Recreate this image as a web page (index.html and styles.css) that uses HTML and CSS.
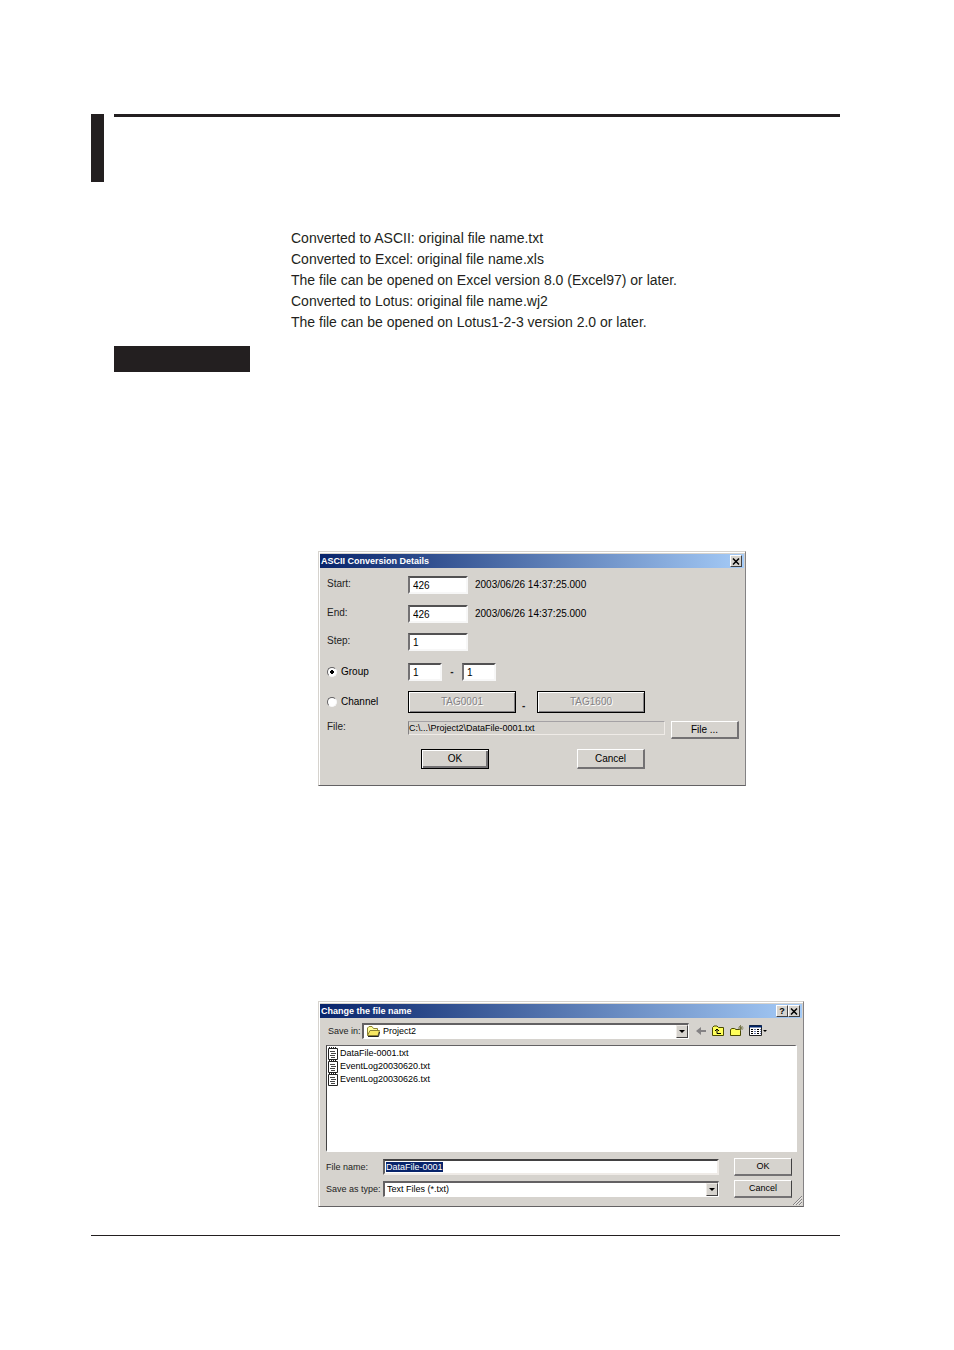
FILE: index.html
```
<!DOCTYPE html>
<html lang="en">
<head>
    <title>ASCII Conversion</title>
    <meta charset="UTF-8">
    <link rel="stylesheet" href="styles.css">
</head>
<body>
    <div class="page">
        <div class="header">
            <div class="header-bar"></div>
            <div class="header-rule"></div>
        </div>
        <div class="notes">
            Converted to ASCII: original file name.txt<br>
            Converted to Excel: original file name.xls<br>
            The file can be opened on Excel version 8.0 (Excel97) or later.<br>
            Converted to Lotus: original file name.wj2<br>
            The file can be opened on Lotus1-2-3 version 2.0 or later.
        </div>
        <div class="section-tag"></div>

        <!-- conversion details -->
        <form class="dialog details">
            <div class="title">
                <span class="title-text">ASCII Conversion Details</span>
                <button type="button" class="title-button" aria-label="Close">
                    <svg width="8" height="7" viewBox="0 0 8 7"><path d="M1 0.5L7 6.5M7 0.5L1 6.5" stroke="#000" stroke-width="1.5"/></svg>
                </button>
            </div>
            <div class="details-body">
                <div class="row start-row">
                    <label class="label" for="start">Start:</label>
                    <input class="box" id="start" value="426">
                    <span class="date">2003/06/26 14:37:25.000</span>
                </div>
                <div class="row">
                    <label class="label" for="end">End:</label>
                    <input class="box" id="end" value="426">
                    <span class="date">2003/06/26 14:37:25.000</span>
                </div>
                <div class="row step-row">
                    <label class="label" for="step">Step:</label>
                    <input class="box" id="step" value="1">
                </div>
                <div class="row">
                    <label class="label radio-label"><input type="radio" name="range" checked>Group</label>
                    <input class="box small" aria-label="First group" value="1">
                    <span class="dash">-</span>
                    <input class="box small" aria-label="Last group" value="1">
                </div>
                <div class="row channel-row">
                    <label class="label radio-label"><input type="radio" name="range">Channel</label>
                    <button type="button" class="tag" disabled>TAG0001</button>
                    <span class="dash low">-</span>
                    <button type="button" class="tag" disabled>TAG1600</button>
                </div>
                <div class="row file-row">
                    <span class="label">File:</span>
                    <span class="path">C:\...\Project2\DataFile-0001.txt</span>
                    <button type="button" class="button">File ...</button>
                </div>
                <div class="row actions">
                    <button type="button" class="button default">OK</button>
                    <button type="button" class="button">Cancel</button>
                </div>
            </div>
        </form>

        <!-- save as -->
        <form class="dialog save">
            <div class="title">
                <span class="title-text">Change the file name</span>
                <button type="button" class="title-button" aria-label="Help">?</button>
                <button type="button" class="title-button" aria-label="Close">
                    <svg width="8" height="7" viewBox="0 0 8 7"><path d="M1 0.5L7 6.5M7 0.5L1 6.5" stroke="#000" stroke-width="1.5"/></svg>
                </button>
            </div>
            <div class="save-body">
                <div class="lookin">
                    <label for="folder">Save in:</label>
                    <div class="combo">
                        <svg class="folder" width="13" height="11" viewBox="0 0 13 11">
                            <path d="M0.5 9.5V2L2 0.5H5L6.5 2.5H10.5V4" fill="#ffff9c" stroke="#8c8232"/>
                            <path d="M0.5 9.5L3 4.5H12.5L11 9.5Z" fill="#f7e763" stroke="#8c8232"/>
                            <path d="M1 10.5H11.5L12.5 6" fill="none" stroke="#222"/>
                        </svg>
                        <select id="folder"><option>Project2</option></select>
                        <span class="arrow"></span>
                    </div>
                    <div class="tools">
                        <button type="button" class="tool" aria-label="Back">
                            <svg width="11" height="12" viewBox="0 0 11 12"><path d="M0 6L5 2V5H10V7H5V10Z" fill="#848284"/></svg>
                        </button>
                        <button type="button" class="tool" aria-label="Up one level">
                            <svg width="13" height="12" viewBox="0 0 13 12">
                                <path d="M0.5 10.5V2.5L2 1H5L6.5 2.5H11.5V10.5Z" fill="#ffff5a" stroke="#4a4a00"/>
                                <path d="M5 4V8.5H9M3 6L5 4L7 6" fill="none" stroke="#000"/>
                            </svg>
                        </button>
                        <button type="button" class="tool" aria-label="New folder">
                            <svg width="14" height="12" viewBox="0 0 14 12">
                                <path d="M0.5 10.5V4.5L2 3.5H4.5L6 4.5H10.5V10.5Z" fill="#ffff5a" stroke="#4a4a00"/>
                                <path d="M10.5 0V6M8 3H13.5M9 1L12.5 5M12.5 1L9 5" stroke="#6b6b3a" stroke-width="0.8"/>
                            </svg>
                        </button>
                        <button type="button" class="tool" aria-label="View">
                            <svg width="19" height="12" viewBox="0 0 19 12">
                                <path d="M0.5 0.5H12.5V10.5H0.5Z" fill="#fff" stroke="#222"/>
                                <path d="M0 1.5H13" stroke="#00246b" stroke-width="2"/>
                                <path d="M2 4.5H4M2 6.5H4M2 8.5H4M8 4.5H10M8 6.5H10M8 8.5H10" stroke="#000"/>
                                <path d="M5 4.5H7M5 6.5H7M5 8.5H7M11 4.5H12M11 6.5H12M11 8.5H12" stroke="#6b79a5"/>
                                <path d="M14 5H18L16 7Z" fill="#000"/>
                            </svg>
                        </button>
                    </div>
                </div>
                <ul class="files">
                    <li><svg class="doc" width="10" height="13" viewBox="0 0 10 13"><path d="M0.5 1.5H9.5V12.5H0.5Z" fill="#fff" stroke="#222"/><path d="M1 0.5H9" stroke="#222" stroke-dasharray="1 1"/><path d="M2 4.5H7M3 6.5H8M2 8.5H7M3 10.5H7" stroke="#444"/></svg>DataFile-0001.txt</li>
                    <li><svg class="doc" width="10" height="13" viewBox="0 0 10 13"><path d="M0.5 1.5H9.5V12.5H0.5Z" fill="#fff" stroke="#222"/><path d="M1 0.5H9" stroke="#222" stroke-dasharray="1 1"/><path d="M2 4.5H7M3 6.5H8M2 8.5H7M3 10.5H7" stroke="#444"/></svg>EventLog20030620.txt</li>
                    <li><svg class="doc" width="10" height="13" viewBox="0 0 10 13"><path d="M0.5 1.5H9.5V12.5H0.5Z" fill="#fff" stroke="#222"/><path d="M1 0.5H9" stroke="#222" stroke-dasharray="1 1"/><path d="M2 4.5H7M3 6.5H8M2 8.5H7M3 10.5H7" stroke="#444"/></svg>EventLog20030626.txt</li>
                </ul>
                <div class="save-row">
                    <label for="filename">File name:</label>
                    <input id="filename" class="filename" value="DataFile-0001">
                    <button type="button" class="button">OK</button>
                </div>
                <div class="save-row">
                    <label for="filetype">Save as type:</label>
                    <div class="combo">
                        <select id="filetype"><option>Text Files (*.txt)</option></select>
                        <span class="arrow"></span>
                    </div>
                    <button type="button" class="button">Cancel</button>
                </div>
            </div>
            <svg class="grip" width="9" height="9" viewBox="0 0 9 9"><path d="M0 9L9 0M3 9L9 3M6 9L9 6" stroke="#848284"/><path d="M1 9L9 1M4 9L9 4M7 9L9 7" stroke="#fff" stroke-width="0.5"/></svg>
        </form>
        <div class="footer-rule"></div>
    </div>
    <script type="text/javascript">
        var filename = document.getElementById("filename");
        filename.focus();
        filename.select();
    </script>
</body>
</html>
```
FILE: styles.css
```
* {
    box-sizing: border-box;
}
body {
    margin: 0;
    background-color: #fff;
    color: #231f20;
    font-family: "Liberation Sans", Arial, sans-serif;
}
svg {
    display: block;
    flex: none;
}
input, select, button {
    margin: 0;
    padding: 0;
    border: 0;
    border-radius: 0;
    outline: 0;
    appearance: none;
    color: #000;
    font: inherit;
}
.page {
    padding: 114px 114px 114px 91px;
}
.header {
    display: flex;
    gap: 10px;
}
.header-bar {
    width: 13px;
    height: 68px;
    background-color: #231f20;
}
.header-rule {
    flex: 1;
    height: 3px;
    background-color: #231f20;
}
.notes {
    margin: 46px 0 13px 200px;
    font-size: 14px;
    line-height: 21px;
}
.section-tag {
    width: 136px;
    height: 26px;
    margin-left: 23px;
    background-color: #231f20;
}
.footer-rule {
    height: 1px;
    margin-top: 28px;
    background-color: #231f20;
}

/* windows */
.dialog {
    max-width: 100%;
    margin-left: 227px;
    padding: 2px 1px 0;
    border: 1px solid #d6d3ce;
    border-right-color: #848284;
    border-bottom-color: #636163;
    box-shadow: inset 1px 1px #fff;
    background-color: #d6d3ce;
    color: #222;
}
.title {
    display: flex;
    align-items: center;
    height: 14px;
    padding: 0 2px 0 1px;
    background: linear-gradient(to right, #08246b, #a5cbf7);
    color: #fff;
    font-size: 9px;
    font-weight: bold;
}
.title-text {
    flex: 1;
}
.title-button {
    display: flex;
    align-items: center;
    justify-content: center;
    width: 12px;
    height: 12px;
    border: 1px solid #fff;
    border-right-color: #424142;
    border-bottom-color: #424142;
    background-color: #d6d3ce;
    line-height: 9px;
}
.button {
    border: 1px solid #fff;
    border-right: 2px solid #737173;
    border-bottom: 2px solid #737173;
    background-color: #d6d3ce;
    text-align: center;
}

/* conversion details */
.details {
    width: 428px;
    margin-top: 179px;
    font-size: 10px;
    line-height: 12px;
}
.details-body {
    padding: 8px 5px 16px 7px;
}
.row {
    display: flex;
    align-items: center;
    margin-bottom: 10px;
}
.start-row {
    margin-bottom: 11px;
}
.step-row {
    margin-bottom: 12px;
}
.channel-row {
    margin-bottom: 8px;
}
.label {
    width: 81px;
    padding-bottom: 2px;
}
.box {
    width: 60px;
    height: 18px;
    padding-left: 3px;
    border: 2px solid #f7f7f7;
    border-top-color: #525152;
    border-left-color: #737173;
    background-color: #fff;
}
.box.small {
    width: 34px;
}
.date {
    margin-left: 7px;
    color: #000;
}
.dash {
    width: 20px;
    text-align: center;
    font-weight: bold;
}
.radio-label {
    display: flex;
    align-items: center;
    gap: 4px;
    padding-bottom: 0;
    color: #000;
}
input[type="radio"] {
    width: 10px;
    height: 10px;
    border: 1px solid #f7f7f7;
    border-top-color: #636163;
    border-left-color: #636163;
    border-radius: 50%;
    background-color: #fff;
}
input[type="radio"]:checked {
    background-image: radial-gradient(circle, #000 2px, transparent 2px);
}
.tag {
    width: 108px;
    height: 22px;
    border: 1px solid #000;
    box-shadow: inset 1px 1px #fff, inset -1px -1px #848284;
    background-color: #d6d3ce;
    color: #848284;
    text-shadow: 1px 1px #fff;
}
.dash.low {
    width: 21px;
    padding-top: 7px;
    text-align: left;
    text-indent: 6px;
}
.file-row {
    align-items: flex-start;
}
.path {
    flex: 1;
    height: 14px;
    border: 1px solid #efebe7;
    border-top-color: #a5a2a5;
    border-left-color: #848284;
    color: #000;
    font-size: 9px;
}
.file-row .button {
    width: 68px;
    height: 18px;
    margin-left: 6px;
}
.actions {
    gap: 88px;
    margin-bottom: 0;
    padding-left: 94px;
}
.actions .button {
    width: 68px;
    height: 20px;
}
.actions .default {
    border: 1px solid #000;
    box-shadow: inset 1px 1px #fff, inset -2px -2px #737173;
}

/* save as */
.save {
    position: relative;
    width: 486px;
    margin-top: 215px;
    font-size: 9px;
    line-height: 11px;
}
.save-body {
    padding: 5px 5px 8px 6px;
}
.lookin {
    display: flex;
    align-items: center;
    padding-left: 2px;
}
.lookin label {
    width: 34px;
    white-space: nowrap;
}
.combo {
    display: flex;
    flex: 1;
    align-items: center;
    height: 16px;
    border: 1px solid #fff;
    border-top: 2px solid #636163;
    border-left: 2px solid #636163;
    background-color: #fff;
}
.combo select {
    flex: 1;
    padding-left: 2px;
    background-color: #fff;
}
.folder {
    margin: 0 1px 0 3px;
}
.arrow {
    display: flex;
    align-items: center;
    justify-content: center;
    width: 12px;
    height: 13px;
    border: 1px solid #efebe7;
    border-right-color: #424142;
    border-bottom-color: #424142;
    background-color: #d6d3ce;
}
.arrow::before {
    content: "";
    border: 3px solid transparent;
    border-top-color: #000;
    border-bottom: 0;
}
.tools {
    display: flex;
    gap: 5px;
    width: 101px;
    margin-left: 7px;
}
.tool {
    background: none;
}
.files {
    height: 107px;
    margin: 6px 0;
    padding: 1px 0 0 1px;
    border: 2px solid #fff;
    border-top: 1px solid #636163;
    border-left: 1px solid #424142;
    background-color: #fff;
    color: #000;
    list-style: none;
}
.files li {
    display: flex;
    align-items: center;
    gap: 2px;
    height: 13px;
}
.save-row {
    display: flex;
    align-items: center;
    margin-right: 5px;
}
.save-row + .save-row {
    margin-top: 4px;
}
.save-row label {
    width: 57px;
    white-space: nowrap;
}
.save-row .button {
    width: 58px;
    height: 18px;
    margin-left: 15px;
    border-right: 1px solid #424142;
}
.filename {
    flex: 1;
    height: 16px;
    padding-left: 1px;
    border: 2px solid #efebe7;
    border-top-color: #424142;
    border-left-color: #636163;
    background-color: #fff;
}
.filename::selection {
    background-color: #08246b;
    color: #fff;
}
.grip {
    position: absolute;
    right: 1px;
    bottom: 1px;
}
```
